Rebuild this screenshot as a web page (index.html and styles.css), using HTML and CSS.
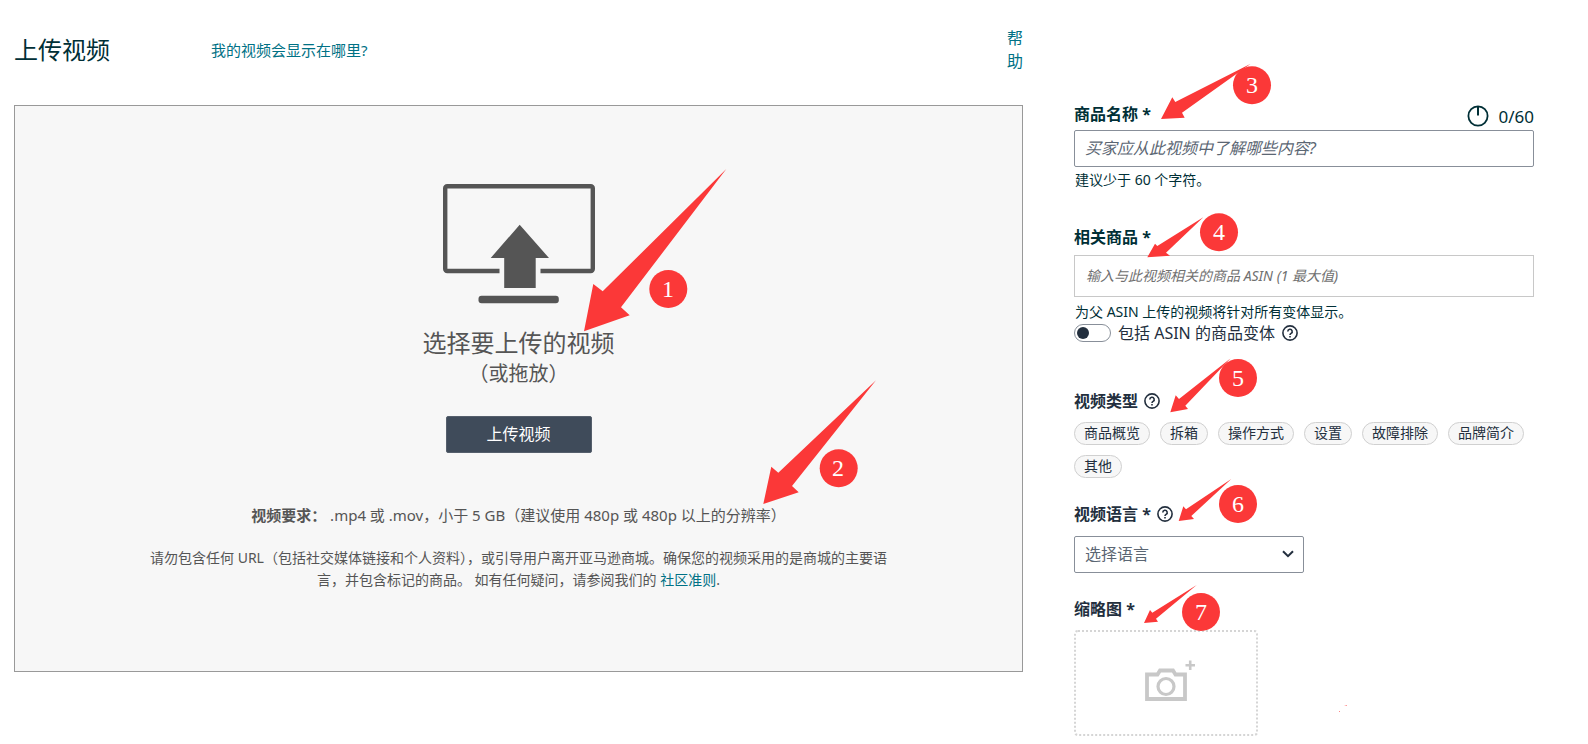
FILE: index.html
```html
<!DOCTYPE html>
<html lang="zh-CN">
<head>
    <meta charset="UTF-8">
    <meta name="viewport" content="width=device-width, initial-scale=1.0">
    <title>上传视频</title>
    <link rel="stylesheet" href="styles.css">
</head>
<body>
    <div class="page">
        <main class="upload">
            <header class="upload-header">
                <h1>上传视频</h1>
                <a href="#" class="where-link">我的视频会显示在哪里?</a>
                <a href="#" class="help-link">帮助</a>
            </header>

            <section class="dropzone">
                <svg class="monitor" viewBox="0 0 152 120" width="152" height="120" aria-hidden="true">
                    <path d="M56.5 87H4.200A2 2 0 0 1 2.200 85V4.200A2 2 0 0 1 4.200 2.200H147.800A2 2 0 0 1 149.800 4.200V85A2 2 0 0 1 147.800 87H97.500" fill="none" stroke="#555" stroke-width="4.400"/>
                    <path d="M76.700 40.700L106 74H92.700V104H61.200V74H47.700Z" fill="#555"/>
                    <rect x="35.500" y="111.700" width="80.300" height="7.600" rx="3" fill="#555"/>
                </svg>
                <h2>选择要上传的视频</h2>
                <p class="drag">（或拖放）</p>
                <button type="button" class="upload-btn">上传视频</button>
                <p class="require"><b>视频要求：</b> .mp4 或 .mov，小于 5 GB（建议使用 480p 或 480p 以上的分辨率）</p>
                <p class="note">请勿包含任何 URL（包括社交媒体链接和个人资料），或引导用户离开亚马逊商城。确保您的视频采用的是商城的主要语言，并包含标记的商品。 如有任何疑问，请参阅我们的 <a href="#">社区准则</a>.</p>

                <!-- steps 1 and 2 -->
                <svg class="steps steps-upload" width="300" height="350" viewBox="0 0 300 350">
                    <path d="M8 170.300L17.300 123L26.700 130.300L150.300 8L45 146.300L53.700 154.300Z"/>
                    <circle cx="92.300" cy="128" r="19"/>
                    <text x="92" y="136">1</text>
                    <path d="M187.300 343L195.300 305.700L202.300 311.700L300 219.300L216 325L222.700 331.300Z"/>
                    <circle cx="262.700" cy="307.300" r="19"/>
                    <text x="262" y="315">2</text>
                </svg>
            </section>
        </main>

        <form class="details">
            <div class="name-row">
                <label for="title">商品名称 *</label>
                <span class="counter">
                    <svg width="22" height="22" viewBox="0 0 22 22" aria-hidden="true">
                        <path d="M11 1.200V10.500" stroke="#002f36" stroke-width="2"/>
                        <circle cx="11" cy="11" r="9.600" fill="none" stroke="#002f36" stroke-width="1.800"/>
                    </svg>
                    0/60
                </span>
            </div>
            <input type="text" id="title" class="title-input" placeholder="买家应从此视频中了解哪些内容?">
            <p class="hint">建议少于 60 个字符。</p>

            <label for="asin" class="asin-label">相关商品 *</label>
            <input type="text" id="asin" class="asin-input" placeholder="输入与此视频相关的商品 ASIN (1 最大值)">
            <p class="hint">为父 ASIN 上传的视频将针对所有变体显示。</p>
            <div class="toggle-row">
                <input type="checkbox" id="variants" class="toggle">
                <label for="variants">包括 ASIN 的商品变体</label>
                <svg class="help-icon" viewBox="0 0 16 16"><circle cx="8" cy="8" r="7.100"/><path d="M5.800 6.500a2.200 2.200 0 1 1 3.300 1.900C8.300 8.900 8 9.100 8 9.900M8 11v1.500"/></svg>
            </div>

            <div class="heading type-heading">
                <span id="type-label">视频类型</span>
                <svg class="help-icon" viewBox="0 0 16 16"><circle cx="8" cy="8" r="7.100"/><path d="M5.800 6.500a2.200 2.200 0 1 1 3.300 1.900C8.300 8.900 8 9.100 8 9.900M8 11v1.500"/></svg>
            </div>
            <div class="chips" role="group" aria-labelledby="type-label">
                <button type="button">商品概览</button>
                <button type="button">拆箱</button>
                <button type="button">操作方式</button>
                <button type="button">设置</button>
                <button type="button">故障排除</button>
                <button type="button">品牌简介</button>
                <button type="button">其他</button>
            </div>

            <div class="heading lang-heading">
                <label for="lang">视频语言 *</label>
                <svg class="help-icon" viewBox="0 0 16 16"><circle cx="8" cy="8" r="7.100"/><path d="M5.800 6.500a2.200 2.200 0 1 1 3.300 1.900C8.300 8.900 8 9.100 8 9.900M8 11v1.500"/></svg>
            </div>
            <div class="select-wrap">
                <select id="lang">
                    <option>选择语言</option>
                </select>
                <svg class="chevron" width="12" height="8" viewBox="0 0 12 8" aria-hidden="true"><path d="M1 1.200L6 6.200L11 1.200" fill="none" stroke="#232f3e" stroke-width="2"/></svg>
            </div>

            <label for="thumb" class="thumb-label">缩略图 *</label>
            <button type="button" id="thumb" class="thumb" aria-label="缩略图">
                <svg width="50" height="42" viewBox="0 0 50 42" aria-hidden="true">
                    <path d="M2 14.500H12.500L15 10.500H28L30.500 14.500H40V39H2Z" fill="none" stroke="#c8c8c8" stroke-width="3.800"/>
                    <circle cx="21" cy="26.500" r="8" fill="none" stroke="#c8c8c8" stroke-width="3.200"/>
                    <path d="M45.200 0.500V10M40.500 5.200H50" stroke="#c8c8c8" stroke-width="2.600"/>
                </svg>
            </button>

            <!-- steps 3 to 7 -->
            <svg class="steps steps-details" width="300" height="744" viewBox="0 0 300 744">
                <path d="M87 119L98.300 97.300L101.300 102L176.700 63.700L108 112.700L110.700 117.700Z"/>
                <circle cx="178" cy="85.300" r="19"/>
                <text x="178" y="93">3</text>
                <path d="M73.300 257.300L81 243.700L83.300 246L129.300 217.300L92 252.700L96 255.700Z"/>
                <circle cx="145" cy="232.300" r="19"/>
                <text x="145" y="240">4</text>
                <path d="M96.300 412.300L101.700 395.300L105 399L156.700 358.300L111.300 405.700L114 409Z"/>
                <circle cx="164" cy="378" r="19"/>
                <text x="164" y="386">5</text>
                <path d="M104.700 521L109.300 506.300L112 509.300L157.300 479L117.300 516L120 519Z"/>
                <circle cx="164" cy="504" r="19"/>
                <text x="164" y="512">6</text>
                <path d="M70 623L76 610L78.300 612.700L122.700 585L82 618.700L84 621.700Z"/>
                <circle cx="127" cy="612" r="19"/>
                <text x="127" y="620">7</text>
                <path d="M265 711h1v1h-1zM270 706l3-1v1z" opacity="0.600"/>
            </svg>
        </form>
    </div>
</body>
</html>
```

FILE: styles.css
```css
* {
    box-sizing: border-box;
}
body {
    margin: 0;
    background: #fff;
    color: #002f36;
    font-family: "Noto Sans", "Noto Sans CJK SC", sans-serif;
    font-size: 16px;
}
h1, h2, p {
    margin: 0;
    font-weight: normal;
}
a {
    color: #007185;
    text-decoration: none;
}
input, select, button {
    font-family: inherit;
    margin: 0;
}
.page {
    display: grid;
    grid-template-columns: 1fr 460px;
    column-gap: 51px;
    align-items: start;
    padding: 0 54px 8px 14px;
}

/* left side */
.upload-header {
    display: flex;
    align-items: center;
    padding-top: 27px;
    margin-bottom: 32px;
}
h1 {
    font-size: 24px;
    line-height: 32px;
}
.where-link {
    margin-left: 101px;
    font-size: 15px;
    line-height: 23px;
}
.help-link {
    width: 16px;
    margin-left: auto;
    font-size: 16px;
    line-height: 23px;
}
.dropzone {
    position: relative;
    display: flex;
    flex-direction: column;
    align-items: center;
    padding: 78px 20px 80px;
    background: #f7f7f7;
    border: 1px solid #999;
    color: #555;
    text-align: center;
}
.monitor {
    margin-bottom: 23px;
}
h2 {
    font-size: 24px;
    line-height: 32px;
}
.drag {
    margin-top: 1px;
    font-size: 20px;
    line-height: 28px;
}
.upload-btn {
    width: 146px;
    height: 37px;
    margin: 28px 0 51px;
    padding: 0 0 4px;
    background: #3f4b5a;
    border: 1px solid #555f6c;
    border-radius: 2px;
    color: #fff;
    font-size: 16px;
}
.require {
    margin-bottom: 21px;
    font-size: 15px;
    line-height: 22px;
}
.note {
    max-width: 740px;
    font-size: 14px;
    line-height: 22px;
}

/* right side */
.details {
    position: relative;
    display: flex;
    flex-direction: column;
    padding-top: 104px;
}
.details > label, .name-row label, .heading {
    font-weight: bold;
    line-height: 20px;
}
.name-row {
    display: flex;
    justify-content: space-between;
    height: 26px;
}
.counter {
    display: flex;
    align-items: center;
    gap: 10px;
    height: 24px;
    font-size: 17px;
}
.title-input, .asin-input {
    width: 100%;
    padding: 0 10px 2px;
    background: #fff;
    border: 1px solid #888f99;
    border-radius: 2px;
    font-size: 16px;
}
.title-input {
    height: 37px;
    margin-bottom: 3px;
}
.asin-input {
    height: 42px;
    margin: 8px 0 5px;
    padding: 0 11px 2px;
    border-color: #c8c8c8;
    border-radius: 0;
    font-size: 14px;
}
.title-input::placeholder, .asin-input::placeholder {
    color: #5b6673;
    font-style: italic;
}
.asin-input::placeholder {
    color: #707070;
}
.hint {
    padding-left: 1px;
    font-size: 14px;
    line-height: 20px;
}
.asin-label {
    margin-top: 37px;
}
.toggle-row {
    display: flex;
    align-items: center;
    gap: 7px;
    margin-top: 1px;
    color: #232f3e;
    line-height: 20px;
}
.toggle {
    appearance: none;
    display: flex;
    align-items: center;
    width: 37px;
    height: 18px;
    padding-left: 2px;
    border: 1px solid #888f99;
    border-radius: 9px;
}
.toggle::before {
    content: "";
    width: 12px;
    height: 12px;
    border-radius: 50%;
    background: #232f3e;
}
.toggle:checked {
    justify-content: flex-end;
    padding-right: 2px;
}
.help-icon {
    width: 16px;
    height: 16px;
    fill: none;
    stroke: #232f3e;
    stroke-width: 1.6;
}
.heading {
    display: flex;
    align-items: center;
    gap: 6px;
    color: #232f3e;
}
.type-heading {
    margin-top: 48px;
}
.chips {
    display: flex;
    flex-wrap: wrap;
    gap: 10px;
    margin-top: 11px;
}
.chips button {
    height: 23px;
    padding: 0 9px 2px;
    background: #f7f7f7;
    border: 1px solid #d0d0d0;
    border-radius: 12px;
    color: #232f3e;
    font-size: 14px;
    line-height: 18px;
}
.lang-heading {
    margin-top: 26px;
}
.select-wrap {
    position: relative;
    width: 50%;
    margin: 12px 0 26px;
}
.select-wrap select {
    appearance: none;
    display: block;
    width: 100%;
    height: 37px;
    padding: 0 10px 2px;
    background: #fff;
    border: 1px solid #888f99;
    border-radius: 2px;
    color: #5b6673;
    font-size: 16px;
}
.chevron {
    position: absolute;
    top: 14px;
    right: 10px;
    pointer-events: none;
}
.thumb-label {
    color: #232f3e;
}
.thumb {
    width: 40%;
    height: 106px;
    margin-top: 11px;
    padding: 0 0 0 8px;
    background: #fff;
    border: 2px dotted #d5d5d5;
    border-radius: 4px;
}

/* numbered red arrows */
.steps {
    position: absolute;
    pointer-events: none;
    overflow: visible;
    fill: #fb3838;
}
.steps text {
    fill: #fff;
    font-family: "Liberation Serif", serif;
    font-size: 24px;
    text-anchor: middle;
}
.steps-upload {
    top: 55px;
    left: calc(50% + 57px);
}
.steps-details {
    top: 0;
    left: 0;
}
```
